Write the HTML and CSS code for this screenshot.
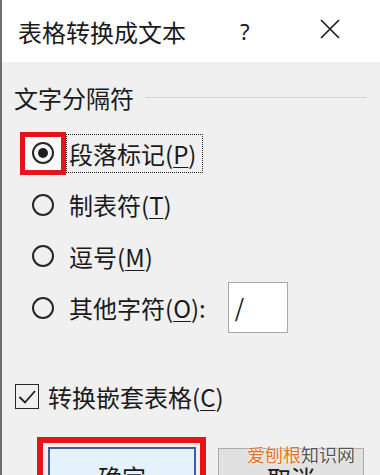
FILE: index.html
```html
<!DOCTYPE html>
<html>
<head>
<meta charset="utf-8">
<link rel="stylesheet" href="styles.css">
</head>
<body>
<div class="dialog">
  <div class="titlebar">
    <span class="title">表格转换成文本</span>
    <span class="help">?</span>
    <svg class="close" width="20" height="20" viewBox="0 0 20 20"><path d="M1 1 L19 19 M19 1 L1 19" stroke="#1e1e1e" stroke-width="1.7" fill="none"/></svg>
  </div>
  <div class="body">
    <div class="group-head">
      <span class="group-label">文字分隔符</span>
      <span class="group-line"></span>
    </div>
    <div class="row">
      <span class="radio-wrap marked"><span class="radio checked"><span class="dot"></span></span></span>
      <span class="label focus">段落标记(<u>P</u>)</span>
    </div>
    <div class="row">
      <span class="radio-wrap"><span class="radio"></span></span>
      <span class="label">制表符(<u>T</u>)</span>
    </div>
    <div class="row">
      <span class="radio-wrap"><span class="radio"></span></span>
      <span class="label">逗号(<u>M</u>)</span>
    </div>
    <div class="row">
      <span class="radio-wrap"><span class="radio"></span></span>
      <span class="label">其他字符(<u>O</u>):</span>
      <span class="textbox">/</span>
    </div>
    <div class="check-row">
      <span class="checkbox"><svg width="22" height="22" viewBox="0 0 22 22"><path d="M3.5 11 L9 16.5 L19 5" stroke="#1e1e1e" stroke-width="1.8" fill="none"/></svg></span>
      <span class="check-label">转换嵌套表格(<u>C</u>)</span>
    </div>
    <div class="buttons">
      <span class="ok-mark"><span class="btn primary">确定</span></span>
      <span class="btn cancel">取消</span>
    </div>
  </div>
  <div class="watermark"><span class="wm-a">爱刨根</span><span class="wm-b">知识网</span></div>
</div>
</body>
</html>
```
FILE: styles.css
```css
html, body {
  margin: 0;
  padding: 0;
}
body {
  width: 380px;
  height: 475px;
  overflow: hidden;
  background: #f0f0f0;
  font-family: "Noto Sans CJK SC", "Microsoft YaHei", sans-serif;
  color: #1a1a1a;
}
.dialog {
  position: relative;
  height: 475px;
  overflow: hidden;
  border-left: 2px solid #6e6e6e;
  box-sizing: border-box;
  display: flex;
  flex-direction: column;
}
.titlebar {
  height: 62px;
  background: #ffffff;
  display: flex;
  align-items: center;
  padding-left: 16px;
  flex-shrink: 0;
}
.title {
  font-size: 24px;
  line-height: 30px;
  width: 222px;
  padding-top: 1px;
}
.help {
  font-family: "Noto Sans", sans-serif;
  font-size: 22px;
  line-height: 30px;
  width: 80px;
}
.close {
  display: block;
  margin-top: -4px;
}
.body {
  flex: 1;
  background: #f0f0f0;
  display: flex;
  flex-direction: column;
}
.group-head {
  display: flex;
  align-items: center;
  margin-top: 20px;
  padding-left: 12px;
  height: 32px;
}
.group-label {
  font-size: 24px;
  line-height: 32px;
}
.group-line {
  flex: 1;
  height: 1px;
  background: #d3d3d3;
  margin-left: 11px;
  margin-right: 13px;
  margin-top: -1px;
}
.row {
  display: flex;
  align-items: center;
  height: 51.5px;
}
.group-head + .row {
  margin-top: 13.5px;
}
.radio-wrap {
  box-sizing: border-box;
  width: 46px;
  height: 43px;
  margin-left: 18px;
  border: 5px solid transparent;
  display: flex;
  align-items: center;
  justify-content: center;
}
.radio-wrap.marked {
  border-color: #e3141c;
  background: #fbfbfb;
}
.radio {
  box-sizing: border-box;
  width: 22px;
  height: 22px;
  border: 2px solid #262626;
  border-radius: 50%;
  display: flex;
  align-items: center;
  justify-content: center;
}
.dot {
  width: 10px;
  height: 10px;
  border-radius: 50%;
  background: #1e1e1e;
}
.label {
  box-sizing: border-box;
  font-size: 24px;
  line-height: 37px;
  height: 39px;
  padding: 0 6px 0 2px;
  border: 1px dotted transparent;
}
.label.focus {
  border-color: #222;
}
u {
  text-decoration-thickness: 1px;
  text-underline-offset: 3px;
}
.textbox {
  box-sizing: border-box;
  width: 60px;
  height: 51px;
  margin-left: 15px;
  border: 1px solid #a8a8a8;
  background: #ffffff;
  font-size: 24px;
  line-height: 47px;
  padding-left: 6px;
}
.check-row {
  display: flex;
  align-items: center;
  height: 40px;
  margin-top: 43px;
  padding-left: 13px;
}
.checkbox {
  box-sizing: border-box;
  width: 24px;
  height: 25px;
  border: 1.8px solid #262626;
  display: flex;
  align-items: center;
  justify-content: center;
}
.check-label {
  font-size: 24px;
  line-height: 32px;
  margin-left: 9px;
}
.buttons {
  display: flex;
  align-items: flex-start;
  margin-top: 20px;
  padding-left: 35px;
}
.ok-mark {
  border: 6px solid #e3141c;
  border-bottom: none;
  padding: 4px 4px 0 5px;
  background: #f7eeee;
}
.btn {
  box-sizing: border-box;
  display: block;
  height: 60px;
  font-size: 24px;
  line-height: 56px;
  text-align: center;
}
.primary {
  width: 148px;
  border: 2px solid #3a5f9a;
  background: #e5f1fb;
}
.cancel {
  width: 146px;
  margin-left: 12px;
  margin-top: 11px;
  border: 1px solid #adadad;
  background: #e1e1e1;
  line-height: 58px;
}
.watermark {
  position: absolute;
  left: 245px;
  top: 441px;
  font-size: 18px;
  line-height: 26px;
  text-shadow: 0 0 2px #ffffff, 0 0 2px #ffffff;
}
.wm-a {
  color: #e8701f;
}
.wm-b {
  color: #555555;
}
```
